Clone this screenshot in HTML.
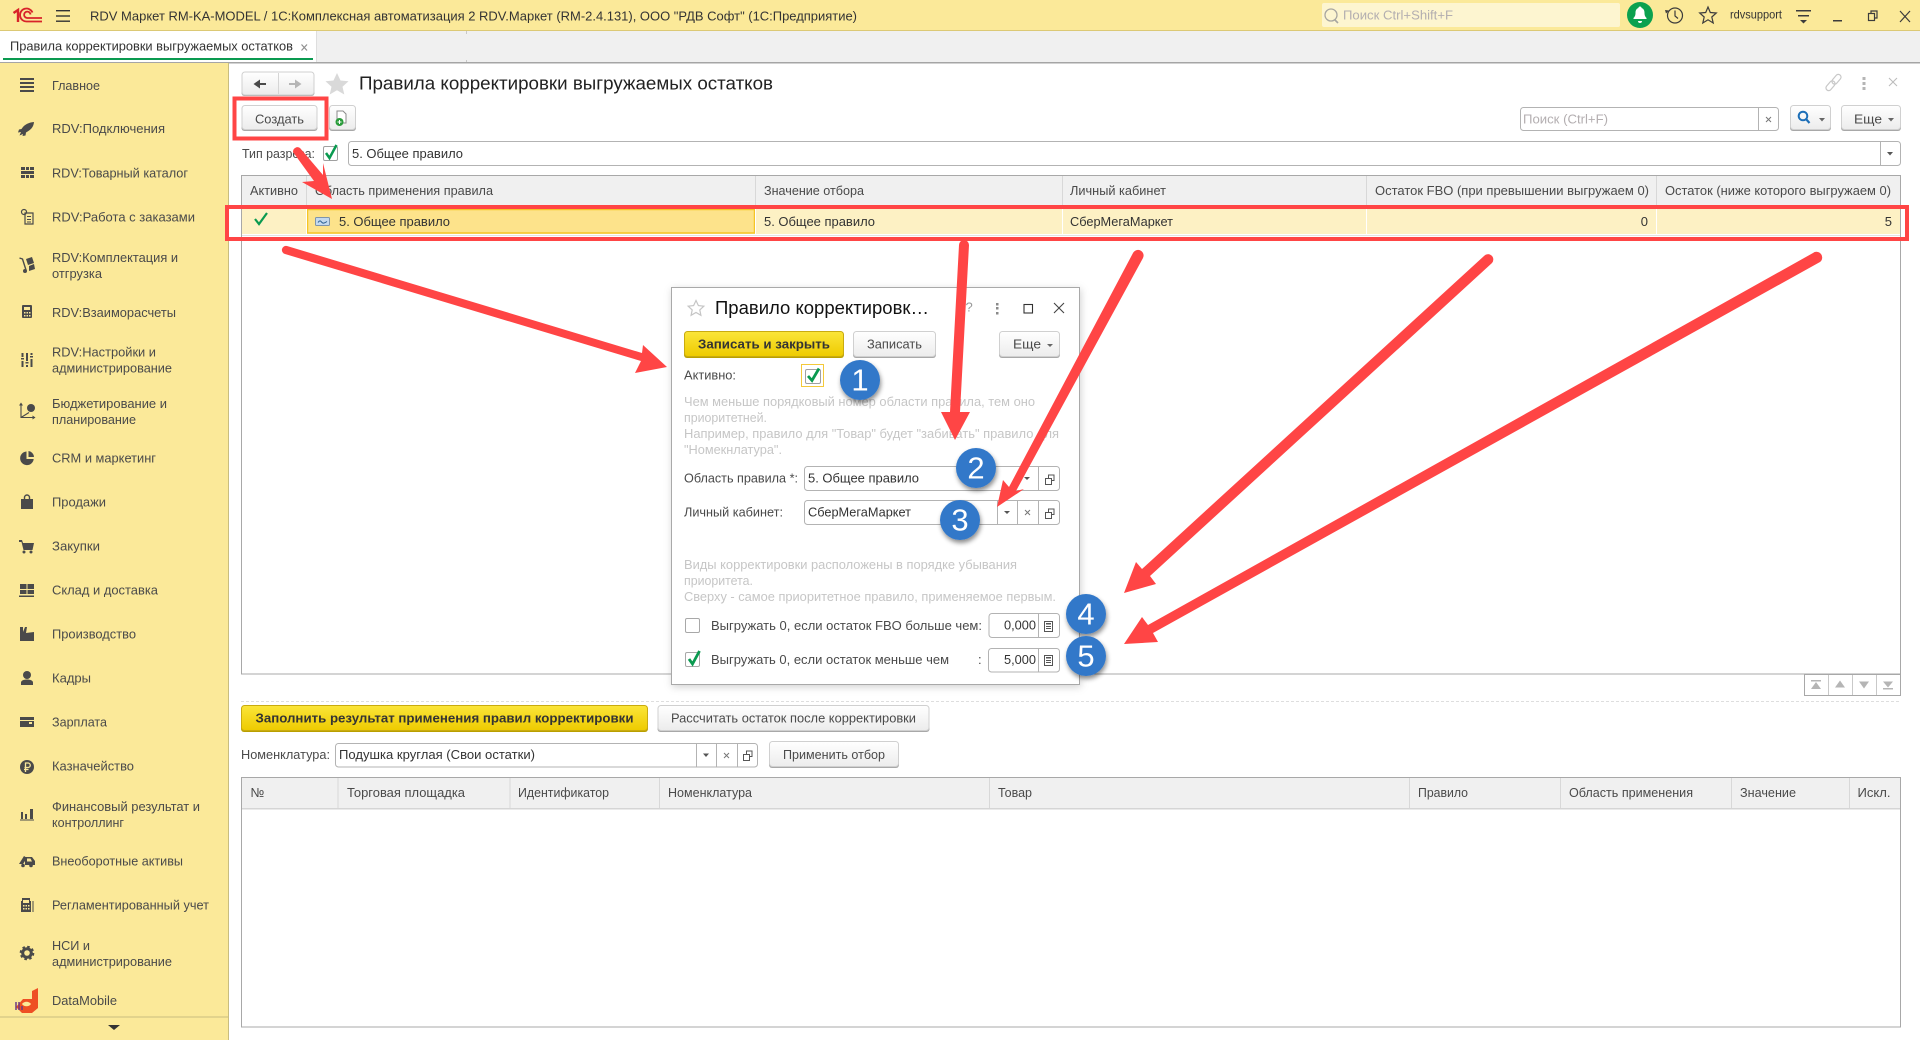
<!DOCTYPE html>
<html lang="ru"><head><meta charset="utf-8"><title>Правила корректировки выгружаемых остатков</title>
<style>
html,body{margin:0;padding:0;background:#fff;width:1920px;height:1040px;overflow:hidden}
svg{display:block}
text{font-family:"Liberation Sans",sans-serif;font-size:13px;fill:#4a4a4a;transform:translateY(-.5px)}
.d{fill:#333}
.h{fill:#c6c6c6}
.ph{fill:#b3aeb0}
.ic{fill:#4a4a4a}
.n{font-size:31px;fill:#fff;text-anchor:middle}
</style></head><body>
<svg xmlns="http://www.w3.org/2000/svg" width="1920" height="1040" viewBox="0 0 1920 1040">
<defs>
<linearGradient id="b" x1="0" y1="0" x2="0" y2="1"><stop offset="0" stop-color="#fff"/><stop offset="1" stop-color="#ececec"/></linearGradient>
<linearGradient id="y" x1="0" y1="0" x2="0" y2="1"><stop offset="0" stop-color="#fbe539"/><stop offset="1" stop-color="#eecb00"/></linearGradient>
<filter id="s" x="-40%" y="-40%" width="180%" height="180%"><feDropShadow dx="1" dy="3" stdDeviation="2.5" flood-color="#000" flood-opacity=".45"/></filter>
<filter id="ds" x="-5%" y="-5%" width="110%" height="110%"><feDropShadow dx="1" dy="2" stdDeviation="4" flood-color="#000" flood-opacity=".18"/></filter>
</defs>

<rect width="1920" height="1040" fill="#fff"/>

<!-- top bar -->
<rect width="1920" height="31" fill="#fbe999"/>
<rect y="30" width="1920" height="1" fill="#dcc975"/>
<g fill="none" stroke="#d8232a" stroke-width="1.800">
<path d="M13.500 13l4.500-3v12" stroke-width="2.400"/>
<path d="M32.500 12.500A6.500 6.500 0 1 0 27 21.500H42"/>
<path d="M30.500 14.500A3.200 3.200 0 1 0 27.500 18H42"/>
</g>
<g fill="#333"><rect x="56" y="10" width="14" height="1.400"/><rect x="56" y="15.300" width="14" height="1.400"/><rect x="56" y="20.500" width="14" height="1.400"/></g>
<text x="90" y="21" class="d" textLength="767" lengthAdjust="spacingAndGlyphs">RDV Маркет RM-KA-MODEL / 1С:Комплексная автоматизация 2 RDV.Маркет (RM-2.4.131), ООО "РДВ Софт"  (1С:Предприятие)</text>

<rect x="1322" y="3" width="298" height="24" rx="2" fill="#fdf5d0"/>
<circle cx="1331" cy="15" r="6" fill="none" stroke="#a8a6a0" stroke-width="1.300"/><path d="M1335 20l3 3" stroke="#a8a6a0" stroke-width="1.600"/>
<text x="1343" y="20" class="ph" textLength="110" lengthAdjust="spacingAndGlyphs">Поиск Ctrl+Shift+F</text>
<circle cx="1640" cy="15" r="13" fill="#0ba14f"/>
<path d="M1640 6.500c-1 0-1.600.7-1.600 1.500-2.300.8-2.900 2.800-2.900 5 0 2.500-.8 3.800-2 5v1h13v-1c-1.200-1.200-2-2.500-2-5 0-2.200-.6-4.200-2.900-5 0-.8-.6-1.500-1.600-1.500zM1638 21a2 2 0 0 0 4 0z" fill="#fff"/>
<g fill="none" stroke="#3c3c3c" stroke-width="1.200"><circle cx="1675" cy="15.500" r="7.500"/><path d="M1675 10.500v5.500l3 2.500"/></g><path d="M1665 10l4 .5-3 3z" fill="#3c3c3c"/>
<path d="M1708 7l2.300 5.500 6 .5-4.500 4 1.400 6-5.200-3.200-5.200 3.200 1.400-6-4.500-4 6-.5z" fill="none" stroke="#3c3c3c" stroke-width="1.200"/>
<text x="1730" y="19" class="d" style="font-size:12px" textLength="52" lengthAdjust="spacingAndGlyphs">rdvsupport</text>
<g fill="#3c3c3c"><rect x="1796" y="10" width="15" height="1.500"/><rect x="1798" y="15" width="11" height="1.500"/><path d="M1800 20h7l-3.500 3.500z"/></g>
<rect x="1833" y="20" width="9" height="1.500" fill="#3c3c3c"/>
<g fill="none" stroke="#3c3c3c" stroke-width="1.200"><rect x="1868.500" y="13.500" width="6" height="7"/><path d="M1871 13.500v-2.500h6v7h-2.500"/><path d="M1900 11l10 11M1910 11l-10 11"/></g>

<!-- tab bar -->
<rect y="31" width="1920" height="31" fill="#f0f0f0"/>
<rect x="0" y="31" width="316" height="31" fill="#fff"/>
<rect x="316" y="31" width="1" height="31" fill="#dedede"/>
<rect x="466" y="31" width="1" height="3" fill="#c8c8c8"/><rect x="466" y="60" width="1" height="2" fill="#c8c8c8"/>
<rect x="3" y="58" width="310" height="2" fill="#0a9a50"/>
<text x="10" y="51" class="d" textLength="283" lengthAdjust="spacingAndGlyphs">Правила корректировки выгружаемых остатков</text>
<path d="M301.500 44.500l5.500 6M307 44.500l-5.500 6" stroke="#8f8f8f" stroke-width="1.200"/>
<rect y="62" width="1920" height="1.500" fill="#a5a5a5"/>

<!-- sidebar -->
<rect y="63" width="228" height="977" fill="#fbe999"/>
<rect x="228" y="63" width="1" height="977" fill="#c9bd7f"/>
<rect y="1016.500" width="228" height="1" fill="#c9bd7f"/>
<path d="M108 1025h12l-6 5z" fill="#333"/>
<g>
<text x="52" y="90.500" textLength="48" lengthAdjust="spacingAndGlyphs">Главное</text>
<text x="52" y="133.500" textLength="113" lengthAdjust="spacingAndGlyphs">RDV:Подключения</text>
<text x="52" y="178" textLength="136" lengthAdjust="spacingAndGlyphs">RDV:Товарный каталог</text>
<text x="52" y="222" textLength="143" lengthAdjust="spacingAndGlyphs">RDV:Работа с заказами</text>
<text x="52" y="262.500" textLength="126" lengthAdjust="spacingAndGlyphs">RDV:Комплектация и</text>
<text x="52" y="278.500" textLength="50" lengthAdjust="spacingAndGlyphs">отгрузка</text>
<text x="52" y="317.500" textLength="124" lengthAdjust="spacingAndGlyphs">RDV:Взаиморасчеты</text>
<text x="52" y="357" textLength="104" lengthAdjust="spacingAndGlyphs">RDV:Настройки и</text>
<text x="52" y="373" textLength="120" lengthAdjust="spacingAndGlyphs">администрирование</text>
<text x="52" y="408.500" textLength="115" lengthAdjust="spacingAndGlyphs">Бюджетирование и</text>
<text x="52" y="424.500" textLength="84" lengthAdjust="spacingAndGlyphs">планирование</text>
<text x="52" y="463" textLength="104" lengthAdjust="spacingAndGlyphs">CRM и маркетинг</text>
<text x="52" y="507" textLength="54" lengthAdjust="spacingAndGlyphs">Продажи</text>
<text x="52" y="551" textLength="48" lengthAdjust="spacingAndGlyphs">Закупки</text>
<text x="52" y="595" textLength="106" lengthAdjust="spacingAndGlyphs">Склад и доставка</text>
<text x="52" y="639" textLength="84" lengthAdjust="spacingAndGlyphs">Производство</text>
<text x="52" y="683" textLength="39" lengthAdjust="spacingAndGlyphs">Кадры</text>
<text x="52" y="727" textLength="55" lengthAdjust="spacingAndGlyphs">Зарплата</text>
<text x="52" y="771" textLength="82" lengthAdjust="spacingAndGlyphs">Казначейство</text>
<text x="52" y="811.500" textLength="148" lengthAdjust="spacingAndGlyphs">Финансовый результат и</text>
<text x="52" y="827.500" textLength="72" lengthAdjust="spacingAndGlyphs">контроллинг</text>
<text x="52" y="866" textLength="131" lengthAdjust="spacingAndGlyphs">Внеоборотные активы</text>
<text x="52" y="910" textLength="157" lengthAdjust="spacingAndGlyphs">Регламентированный учет</text>
<text x="52" y="950.500" textLength="38" lengthAdjust="spacingAndGlyphs">НСИ и</text>
<text x="52" y="966.500" textLength="120" lengthAdjust="spacingAndGlyphs">администрирование</text>
<text x="52" y="1005.500" textLength="65" lengthAdjust="spacingAndGlyphs">DataMobile</text>
</g>
<!-- sidebar icons -->
<g class="ic">
<rect x="20" y="78" width="14" height="2"/><rect x="20" y="82" width="14" height="2"/><rect x="20" y="86" width="14" height="2"/><rect x="20" y="90" width="14" height="2"/>
<path d="M34 122c-6 .5-10 3-12.500 7l-2.500.5-1 3 3-.5-1.500 3.500 3.500-1.500-.5 2 3-.5.5-3c4.500-2.500 7.500-5 8-10.500z"/>
<rect x="21" y="167" width="4" height="3"/><rect x="26" y="167" width="3" height="3"/><rect x="30" y="167" width="4" height="3"/><rect x="21" y="171" width="13" height="3"/><rect x="21" y="175" width="4" height="3"/><rect x="26" y="175" width="3" height="3"/><rect x="30" y="175" width="4" height="3"/>
<path d="M25 213h8v11h-8z" fill="none" stroke="#4a4a4a" stroke-width="1.200"/><circle cx="24" cy="212" r="2.500" fill="none" stroke="#4a4a4a" stroke-width="1.200"/><rect x="27" y="216" width="4" height="1"/><rect x="27" y="219" width="4" height="1"/><rect x="27" y="221.500" width="4" height="1"/>
<path d="M19.500 258l3 1 3.500 11" fill="none" stroke="#4a4a4a" stroke-width="1.400"/><path d="M26 259l6-2 2 6-6 2zM29 266l5-2 1 5-6 2z"/><circle cx="25" cy="271" r="2"/>
<path d="M23 305h8a1 1 0 0 1 1 1v11a1 1 0 0 1-1 1h-8a1 1 0 0 1-1-1v-11a1 1 0 0 1 1-1zm1 2v3h6v-3zm0 5v1.500h1.500v-1.500zm2.500 0v1.500h1.500v-1.500zm2.500 0v1.500h1.500v-1.500zm-5 3v1.500h1.500v-1.500zm2.500 0v1.500h1.500v-1.500zm2.500 0v1.500h1.500v-1.500z" fill-rule="evenodd"/>
<rect x="21.500" y="353" width="2" height="4"/><rect x="21" y="358" width="3" height="1.500"/><rect x="21.500" y="361" width="2" height="6"/><rect x="26" y="353" width="2" height="8"/><rect x="25.500" y="362" width="3" height="1.500"/><rect x="26" y="365" width="2" height="2"/><rect x="30.500" y="353" width="2" height="2"/><rect x="30" y="356" width="3" height="1.500"/><rect x="30.500" y="359" width="2" height="8"/>
<path d="M21 404v13.500h14M21 417.500l8-5" fill="none" stroke="#4a4a4a" stroke-width="1.100"/><path d="M21 402.500l-2 3h4zM35.500 417.500l-3-2v4z"/><circle cx="31" cy="408" r="4"/>
<path d="M26.500 451.500a6.800 6.800 0 1 0 7.200 7.500h-7.200z"/><path d="M28.500 451a6.300 6.300 0 0 1 5.500 6h-5.500z"/>
<path d="M21 499h12v10h-12z"/><path d="M24.500 499v-1.500a2.500 2.500 0 0 1 5 0v1.500" fill="none" stroke="#4a4a4a" stroke-width="1.400"/>
<path d="M19 540h3l1 3h11l-1.500 7h-9l-2-8h-2.500z"/><circle cx="24" cy="552" r="1.500"/><circle cx="31" cy="552" r="1.500"/>
<rect x="20" y="584" width="6.500" height="5"/><rect x="27.500" y="584" width="6.500" height="5"/><rect x="20" y="590" width="6.500" height="4"/><rect x="27.500" y="590" width="6.500" height="4"/><rect x="19" y="595.500" width="15" height="1.500"/>
<path d="M20 641v-14h3v5l2-5h2l-1 6 8-1v9z"/>
<circle cx="27" cy="675" r="4"/><path d="M21 685v-2.500c0-2 3-3 6-3s6 1 6 3v2.500z"/>
<path d="M20 717h14v10h-14z"/><rect x="20" y="720" width="14" height="1" fill="#fbe999"/><rect x="29" y="722" width="3" height="2" fill="#fbe999"/>
<circle cx="27" cy="767" r="7"/><path d="M25.500 772v-9h2.500a2.200 2.200 0 0 1 0 4.500h-3.500M24 769.500h4.500" fill="none" stroke="#fbe999" stroke-width="1.300"/>
<path d="M21 812h2v7h-2zM25 814h2v5h-2zM30 809h3v10h-3zM20 819.500h14v1h-14z"/>
<path d="M19 864l5-8 3 2-4 6zM25 857l7 0 3 4v4h-10zM27 858.500v3h5l-1.500-3z"/><circle cx="23" cy="865.500" r="1.800"/><circle cx="31" cy="865.500" r="1.800"/>
<path d="M22 898h8v3h1v11h-10v-11h1zm1 2v3h6v-3zm0 5v1.500h1.500v-1.500zm2.500 0v1.500h1.500v-1.500zm2.500 0v1.500h1.500v-1.500zm-5 3v1.500h1.500v-1.500zm2.500 0v1.500h1.500v-1.500zm2.500 0v1.500h1.500v-1.500z" fill-rule="evenodd"/><rect x="32.500" y="901" width="1" height="11"/>
</g>
<circle cx="27" cy="953" r="4.300" fill="none" stroke="#4a4a4a" stroke-width="3"/>
<circle cx="27" cy="953" r="6.300" fill="none" stroke="#4a4a4a" stroke-width="2" stroke-dasharray="2.600 2.350"/>
<path d="M38 988v20l-6 5h-10l-6-6 7-8h9v-8z" fill="#ee4f24"/><path d="M22 1004c2-3 7-3 9 0-2 3-7 3-9 0z" fill="#fbe999"/><path d="M16 1002v8M19 1002v8M22 1006v4" stroke="#6b3a84" stroke-width="1.500"/>

<!-- nav -->
<rect x="241.500" y="73" width="73" height="23" rx="3" fill="#a8a8a8"/>
<rect x="242" y="72" width="72" height="23" rx="3" fill="url(#b)" stroke="#d0d0d0"/>
<rect x="278" y="73" width="1" height="21" fill="#d5d5d5"/>
<path d="M266 83h-6v-3.500l-6.500 4.500 6.500 4.500v-3.500h6z" fill="#4a4a4a"/>
<path d="M289 83h6v-3.500l6.500 4.500-6.500 4.500v-3.500h-6z" fill="#b5b5b5"/>
<path d="M337 73l3.500 7.500 8 .8-6 5.400 1.800 7.800-7.300-4.200-7.300 4.200 1.800-7.800-6-5.400 8-.8z" fill="#d9d9d9"/>
<text x="359" y="90" style="font-size:18px;fill:#222" textLength="414" lengthAdjust="spacingAndGlyphs">Правила корректировки выгружаемых остатков</text>
<g fill="none" stroke="#c8c8c8" stroke-width="1.200"><rect x="1825" y="83" width="11" height="5.500" rx="2.700" transform="rotate(-50 1830.500 85.750)"/><rect x="1831" y="76.500" width="11" height="5.500" rx="2.700" transform="rotate(-50 1836.500 79.250)"/></g>
<g fill="#b5b5b5"><rect x="1862.500" y="77" width="3" height="3"/><rect x="1862.500" y="82" width="3" height="3"/><rect x="1862.500" y="87" width="3" height="3"/></g>
<path d="M1889 78l8 8M1897 78l-8 8" stroke="#bcbcbc" stroke-width="1.100"/>

<!-- command row -->
<rect x="241.500" y="106" width="76" height="25" rx="3" fill="#a8a8a8"/>
<rect x="242" y="105.500" width="75" height="24" rx="3" fill="url(#b)" stroke="#d0d0d0"/>
<text x="255" y="124" textLength="49" lengthAdjust="spacingAndGlyphs">Создать</text>
<rect x="329" y="106" width="27" height="25" rx="3" fill="#a8a8a8"/>
<rect x="329.500" y="105.500" width="26" height="24" rx="3" fill="url(#b)" stroke="#d0d0d0"/>
<path d="M337 111h6l3 3v9h-9z" fill="#fff" stroke="#8b8b8b"/><circle cx="339.500" cy="122" r="4" fill="#2a9c3b"/><path d="M337.500 122h4M339.500 120v4" stroke="#fff"/>

<rect x="1520.500" y="107.500" width="258" height="23" rx="3" fill="#fff" stroke="#b3b3b3"/>
<rect x="1758" y="108" width="1" height="22" fill="#b3b3b3"/>
<text x="1523" y="124" class="ph" textLength="85" lengthAdjust="spacingAndGlyphs">Поиск (Ctrl+F)</text>
<path d="M1766 117l5 5M1771 117l-5 5" stroke="#777" stroke-width="1"/>
<rect x="1790" y="106" width="41" height="25" rx="3" fill="#a8a8a8"/><rect x="1790.500" y="105.500" width="40" height="24" rx="3" fill="url(#b)" stroke="#d0d0d0"/>
<circle cx="1803" cy="116" r="4.300" fill="none" stroke="#1d6fb8" stroke-width="2"/><path d="M1806 119l3.500 4" stroke="#1d6fb8" stroke-width="2.200"/><path d="M1819 118h6l-3 3.500z" fill="#666"/>
<rect x="1841" y="106" width="60" height="25" rx="3" fill="#a8a8a8"/><rect x="1841.500" y="105.500" width="59" height="24" rx="3" fill="url(#b)" stroke="#d0d0d0"/>
<text x="1854" y="124" textLength="28" lengthAdjust="spacingAndGlyphs">Еще</text><path d="M1888 118h6l-3 3.500z" fill="#666"/>

<!-- filter -->
<text x="242" y="158.500" textLength="73" lengthAdjust="spacingAndGlyphs">Тип разреза:</text>
<rect x="323.500" y="146.500" width="14" height="14" rx="1.500" fill="#fff" stroke="#a0a0a0"/>
<path d="M326 153l3.500 5 7-13" fill="none" stroke="#0a9a50" stroke-width="2.500"/>
<rect x="348.500" y="141.500" width="1552" height="24" rx="3" fill="#fff" stroke="#b3b3b3"/>
<rect x="1880" y="142" width="1" height="23" fill="#b3b3b3"/>
<text x="352" y="158.500" class="d" textLength="111" lengthAdjust="spacingAndGlyphs">5. Общее правило</text>
<path d="M1887 152h6l-3 3.500z" fill="#555"/>

<!-- table 1 -->
<rect x="241.500" y="175.500" width="1659" height="498.500" fill="#fff" stroke="#a8a8a8"/>
<rect x="242" y="176" width="1658" height="29" fill="#f0f0f0"/>
<g fill="#d8d8d8"><rect x="306" y="176" width="1" height="29"/><rect x="755" y="176" width="1" height="29"/><rect x="1062" y="176" width="1" height="29"/><rect x="1366" y="176" width="1" height="29"/><rect x="1656" y="176" width="1" height="29"/></g>
<rect x="242" y="205" width="1658" height="1" fill="#e0e0e0"/>
<text x="250" y="195.500" textLength="48" lengthAdjust="spacingAndGlyphs">Активно</text>
<text x="315" y="195.500" textLength="178" lengthAdjust="spacingAndGlyphs">Область применения правила</text>
<text x="764" y="195.500" textLength="100" lengthAdjust="spacingAndGlyphs">Значение отбора</text>
<text x="1070" y="195.500" textLength="96" lengthAdjust="spacingAndGlyphs">Личный кабинет</text>
<text x="1375" y="195.500" textLength="274" lengthAdjust="spacingAndGlyphs">Остаток FBO (при превышении выгружаем 0)</text>
<text x="1665" y="195.500" textLength="226" lengthAdjust="spacingAndGlyphs">Остаток (ниже которого выгружаем 0)</text>
<rect x="242" y="206" width="1658" height="28" fill="#fdf1c4"/>
<rect x="307.500" y="209.500" width="447" height="23.500" fill="#fde38b" stroke="#f5c526" stroke-width="1.500"/>
<g fill="#fff"><rect x="306" y="206" width="1" height="28"/><rect x="755" y="206" width="1" height="28"/><rect x="1062" y="206" width="1" height="28"/><rect x="1366" y="206" width="1" height="28"/><rect x="1656" y="206" width="1" height="28"/></g>
<rect x="242" y="235" width="1658" height="1" fill="#e2e2e2"/>
<path d="M255 219l4 5 8-11" fill="none" stroke="#0a9a50" stroke-width="2.200"/>
<rect x="315.500" y="217.500" width="14" height="8" rx="1" fill="#c4d9ee" stroke="#7f95ab"/><path d="M318 222.500c2-3 3-1 4 0s2 1 5-1" fill="none" stroke="#2a5f92"/>
<text x="339" y="226.500" class="d" textLength="111" lengthAdjust="spacingAndGlyphs">5. Общее правило</text>
<text x="764" y="226.500" class="d" textLength="111" lengthAdjust="spacingAndGlyphs">5. Общее правило</text>
<text x="1070" y="226.500" class="d" textLength="103" lengthAdjust="spacingAndGlyphs">СберМегаМаркет</text>
<text x="1648" y="226.500" class="d" text-anchor="end">0</text>
<text x="1892" y="226.500" class="d" text-anchor="end">5</text>

<!-- scroll buttons -->
<rect x="1804.500" y="674.500" width="96" height="21" fill="#fff" stroke="#a8a8a8"/>
<g fill="#c9c9c9"><rect x="1828" y="675" width="1" height="20"/><rect x="1852" y="675" width="1" height="20"/><rect x="1876" y="675" width="1" height="20"/></g>
<g fill="#b5b5b5"><rect x="1811" y="680" width="10" height="1.500"/><path d="M1816 682l-5 7h10zM1840 680.500l-5 7h10z"/><path d="M1859 681.500h10l-5 7zM1883 681.500h10l-5 6z"/><rect x="1883" y="688" width="10" height="1.500"/></g>

<!-- dashed -->
<path d="M241 701.500h1660" stroke="#dedede" stroke-dasharray="3 2"/>

<!-- bottom buttons -->
<rect x="241" y="706" width="407" height="26" rx="3" fill="#b99f00"/>
<rect x="241.500" y="705.500" width="406" height="25" rx="3" fill="url(#y)" stroke="#c9ab10"/>
<text x="255.500" y="723" class="d" style="font-weight:bold" textLength="378" lengthAdjust="spacingAndGlyphs">Заполнить результат применения правил корректировки</text>
<rect x="657.500" y="706" width="272" height="26" rx="3" fill="#a8a8a8"/>
<rect x="658" y="705.500" width="271" height="25" rx="3" fill="url(#b)" stroke="#d0d0d0"/>
<text x="671" y="723" textLength="245" lengthAdjust="spacingAndGlyphs">Рассчитать остаток после корректировки</text>
<text x="241" y="759.500" textLength="89" lengthAdjust="spacingAndGlyphs">Номенклатура:</text>
<rect x="335.500" y="743.500" width="422" height="23.500" rx="3" fill="#fff" stroke="#b3b3b3"/>
<g fill="#b3b3b3"><rect x="696" y="744" width="1" height="23"/><rect x="716" y="744" width="1" height="23"/><rect x="737" y="744" width="1" height="23"/></g>
<text x="339" y="759.500" class="d" textLength="196" lengthAdjust="spacingAndGlyphs">Подушка круглая (Свои остатки)</text>
<path d="M703 753.500h6l-3 3.500z" fill="#555"/><path d="M724 753l5 5M729 753l-5 5" stroke="#777"/>
<g fill="none" stroke="#555"><rect x="743.500" y="754.500" width="6" height="6"/><path d="M746.500 754v-3h5.500v5.500h-2.500"/></g>
<rect x="769" y="742" width="130" height="26" rx="3" fill="#a8a8a8"/>
<rect x="769.500" y="741.500" width="129" height="25" rx="3" fill="url(#b)" stroke="#d0d0d0"/>
<text x="783" y="759.500" textLength="102" lengthAdjust="spacingAndGlyphs">Применить отбор</text>

<!-- table 2 -->
<rect x="241.500" y="777.500" width="1659" height="249.500" fill="#fff" stroke="#a8a8a8"/>
<rect x="242" y="778" width="1658" height="30" fill="#f0f0f0"/>
<rect x="242" y="808" width="1658" height="1.500" fill="#d5d5d5"/>
<g fill="#d8d8d8"><rect x="337.500" y="778" width="1" height="30"/><rect x="509.500" y="778" width="1" height="30"/><rect x="659" y="778" width="1" height="30"/><rect x="989" y="778" width="1" height="30"/><rect x="1409" y="778" width="1" height="30"/><rect x="1560" y="778" width="1" height="30"/><rect x="1731" y="778" width="1" height="30"/><rect x="1849" y="778" width="1" height="30"/></g>
<text x="250.500" y="797.500">№</text>
<text x="347" y="797.500" textLength="118" lengthAdjust="spacingAndGlyphs">Торговая площадка</text>
<text x="518" y="797.500" textLength="91" lengthAdjust="spacingAndGlyphs">Идентификатор</text>
<text x="668" y="797.500" textLength="84" lengthAdjust="spacingAndGlyphs">Номенклатура</text>
<text x="998" y="797.500" textLength="34" lengthAdjust="spacingAndGlyphs">Товар</text>
<text x="1418" y="797.500" textLength="50" lengthAdjust="spacingAndGlyphs">Правило</text>
<text x="1569" y="797.500" textLength="124" lengthAdjust="spacingAndGlyphs">Область применения</text>
<text x="1740" y="797.500" textLength="56" lengthAdjust="spacingAndGlyphs">Значение</text>
<text x="1857.500" y="797.500" textLength="33" lengthAdjust="spacingAndGlyphs">Искл.</text>

<!-- dialog -->
<rect x="671.500" y="287.500" width="408" height="397" fill="#fff" stroke="#a9a9a9" filter="url(#ds)"/>
<path d="M696 300.500l2.400 5.100 5.400.6-4 3.700 1.100 5.400-4.900-2.800-4.900 2.800 1.100-5.400-4-3.700 5.400-.6z" fill="none" stroke="#c5c5c5" stroke-width="1.200"/>
<text x="715" y="314.500" style="font-size:18px;fill:#111" textLength="214" lengthAdjust="spacingAndGlyphs">Правило корректировк…</text>
<text x="965.500" y="312" style="font-size:13px;fill:#999">?</text>
<g fill="#8a8a8a"><rect x="996" y="303" width="2.500" height="2.500"/><rect x="996" y="307" width="2.500" height="2.500"/><rect x="996" y="312" width="2.500" height="2.500"/></g>
<rect x="1024" y="304.500" width="8.500" height="8.500" fill="none" stroke="#333" stroke-width="1.100"/>
<path d="M1054 303l10 10M1064 303l-10 10" stroke="#444" stroke-width="1.100"/>

<rect x="684" y="332" width="160" height="26" rx="3" fill="#b99f00"/>
<rect x="684.500" y="331.500" width="159" height="25" rx="3" fill="url(#y)" stroke="#c9ab10"/>
<text x="698" y="349" class="d" style="font-weight:bold" textLength="132" lengthAdjust="spacingAndGlyphs">Записать и закрыть</text>
<rect x="853" y="332" width="83" height="26" rx="3" fill="#a8a8a8"/>
<rect x="853.500" y="331.500" width="82" height="25" rx="3" fill="url(#b)" stroke="#d0d0d0"/>
<text x="867" y="349" textLength="55" lengthAdjust="spacingAndGlyphs">Записать</text>
<rect x="999" y="332" width="61" height="26" rx="3" fill="#a8a8a8"/>
<rect x="999.500" y="331.500" width="60" height="25" rx="3" fill="url(#b)" stroke="#d0d0d0"/>
<text x="1013" y="349" textLength="28" lengthAdjust="spacingAndGlyphs">Еще</text><path d="M1047 344h6l-3 3z" fill="#666"/>

<text x="684" y="380" textLength="52" lengthAdjust="spacingAndGlyphs">Активно:</text>
<rect x="801.500" y="364.500" width="22" height="22" fill="#fff" stroke="#f4c93a"/>
<rect x="805.500" y="369.500" width="15" height="14" rx="1.500" fill="#fff" stroke="#a0a0a0"/>
<path d="M808 376l4 4.500 7-12" fill="none" stroke="#0a9a50" stroke-width="2.800"/>

<g>
<text class="h" x="684" y="406.500" textLength="351" lengthAdjust="spacingAndGlyphs">Чем меньше порядковый номер области правила, тем оно</text>
<text class="h" x="684" y="422.500" textLength="83" lengthAdjust="spacingAndGlyphs">приоритетней.</text>
<text class="h" x="684" y="438.500" textLength="375" lengthAdjust="spacingAndGlyphs">Например, правило для "Товар" будет "забивать" правило для</text>
<text class="h" x="684" y="454.500" textLength="98" lengthAdjust="spacingAndGlyphs">"Номекнлатура".</text>
<text class="h" x="684" y="569.500" textLength="333" lengthAdjust="spacingAndGlyphs">Виды корректировки расположены в порядке убывания</text>
<text class="h" x="684" y="585.500" textLength="69" lengthAdjust="spacingAndGlyphs">приоритета.</text>
<text class="h" x="684" y="601.500" textLength="372" lengthAdjust="spacingAndGlyphs">Сверху - самое приоритетное правило, применяемое первым.</text>
</g>

<text x="684" y="483" textLength="114" lengthAdjust="spacingAndGlyphs">Область правила *:</text>
<rect x="804.500" y="466.500" width="255" height="24" rx="3" fill="#fff" stroke="#b3b3b3"/>
<rect x="1038" y="467" width="1" height="23" fill="#b3b3b3"/>
<text x="808" y="483" class="d" textLength="111" lengthAdjust="spacingAndGlyphs">5. Общее правило</text>
<path d="M1024 477h6l-3 3z" fill="#555"/>
<g fill="none" stroke="#555"><rect x="1045.500" y="478.500" width="6" height="6"/><path d="M1048.500 478v-3h5.500v5.500h-2.500"/></g>

<text x="684" y="517" textLength="99" lengthAdjust="spacingAndGlyphs">Личный кабинет:</text>
<rect x="804.500" y="500.500" width="255" height="24" rx="3" fill="#fff" stroke="#b3b3b3"/>
<g fill="#b3b3b3"><rect x="997" y="501" width="1" height="23"/><rect x="1017" y="501" width="1" height="23"/><rect x="1038" y="501" width="1" height="23"/></g>
<text x="808" y="517" class="d" textLength="103" lengthAdjust="spacingAndGlyphs">СберМегаМаркет</text>
<path d="M1004 511h6l-3 3z" fill="#555"/><path d="M1025 510l5 5M1030 510l-5 5" stroke="#777"/>
<g fill="none" stroke="#555"><rect x="1045.500" y="512.500" width="6" height="6"/><path d="M1048.500 512v-3h5.500v5.500h-2.500"/></g>

<rect x="685.500" y="618.500" width="14" height="14" rx="1.500" fill="#fff" stroke="#a8a8a8"/>
<text x="711" y="630.500" textLength="271" lengthAdjust="spacingAndGlyphs">Выгружать 0, если остаток FBO больше чем:</text>
<rect x="989" y="613.500" width="70.500" height="24" rx="3" fill="#fff" stroke="#b3b3b3"/>
<rect x="1038" y="614" width="1" height="23" fill="#b3b3b3"/>
<text x="1004" y="630" class="d" textLength="32" lengthAdjust="spacingAndGlyphs">0,000</text>
<g fill="none" stroke="#555"><rect x="1044.500" y="621.500" width="8" height="10"/></g><g fill="#555"><rect x="1046" y="623" width="5" height="1.500"/><rect x="1046" y="626" width="5" height="1"/><rect x="1046" y="628" width="5" height="1"/></g>

<rect x="685.500" y="652.500" width="14" height="14" rx="1.500" fill="#fff" stroke="#a8a8a8"/>
<path d="M689 659l3.500 5 7-13" fill="none" stroke="#0a9a50" stroke-width="2.800"/>
<text x="711" y="664.500" textLength="238" lengthAdjust="spacingAndGlyphs">Выгружать 0, если остаток меньше чем</text>
<text x="978" y="664.500">:</text>
<rect x="988.500" y="648.500" width="71" height="23.500" rx="3" fill="#fff" stroke="#b3b3b3"/>
<rect x="1038" y="649" width="1" height="23" fill="#b3b3b3"/>
<text x="1004" y="664.500" class="d" textLength="32" lengthAdjust="spacingAndGlyphs">5,000</text>
<g fill="none" stroke="#555"><rect x="1044.500" y="655.500" width="8" height="10"/></g><g fill="#555"><rect x="1046" y="657" width="5" height="1.500"/><rect x="1046" y="660" width="5" height="1"/><rect x="1046" y="662" width="5" height="1"/></g>

<!-- red boxes -->
<rect x="234.500" y="98.500" width="92" height="40" fill="none" stroke="#ff4545" stroke-width="4"/>
<rect x="227" y="207" width="1680" height="32" fill="none" stroke="#ff4545" stroke-width="4"/>

<!-- arrows -->
<g fill="#ff4545" stroke="none">
<path d="M287 246a4 4 0 0 0-2 8L641 361l-6 12 32-6-24-22-1 8z"/>
<path d="M293 152a4.500 4.500 0 0 1 7-4l23 27 0-12 9 36-30-17 12-1z"/>
<path d="M959 245a5 5 0 0 1 10 0L960 412H970L955 440 941 412H950Z"/>
<path d="M1133 253a5 5 0 0 1 10 5L1016 491l8-2-27 18 6-27 6 7z"/>
<path d="M1484 256a5 5 0 0 1 8 7L1150 576l6 8-32 9 12-31 6 7z"/>
<path d="M1813 253a5 5 0 0 1 7 9L1153 633l5 9-34 2 18-27 6 8z"/>
</g>

<!-- number circles -->
<g filter="url(#s)">
<circle cx="860" cy="380" r="20" fill="#3278c9"/>
<circle cx="976" cy="468" r="20" fill="#3278c9"/>
<circle cx="960" cy="520" r="20" fill="#3278c9"/>
<circle cx="1086" cy="614" r="20" fill="#3278c9"/>
<circle cx="1086" cy="656" r="20" fill="#3278c9"/>
</g>
<text class="n" x="860" y="391">1</text>
<text class="n" x="976" y="479">2</text>
<text class="n" x="960" y="531">3</text>
<text class="n" x="1086" y="625">4</text>
<text class="n" x="1086" y="667">5</text>
</svg>
</body></html>
